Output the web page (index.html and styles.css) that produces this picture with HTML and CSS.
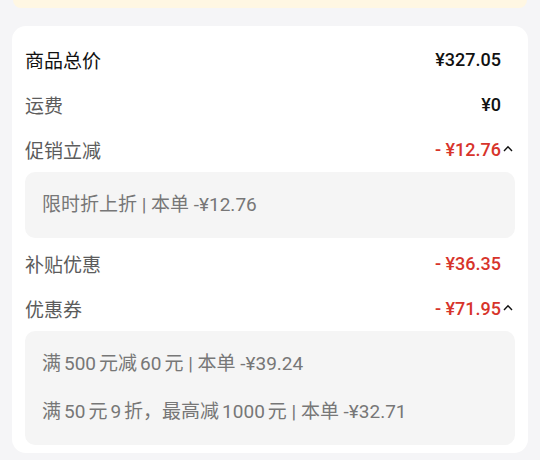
FILE: index.html
```html
<!DOCTYPE html>
<html lang="zh-CN">
<head>
<meta charset="utf-8">
<link rel="stylesheet" href="styles.css">
</head>
<body>
<div class="page">
  <div class="banner"></div>
  <div class="card">
    <div class="row">
      <span class="label dark">商品总价</span>
      <span class="value">¥327.05</span>
      <span class="slot"></span>
    </div>
    <div class="row">
      <span class="label">运费</span>
      <span class="value">¥0</span>
      <span class="slot"></span>
    </div>
    <div class="row">
      <span class="label">促销立减</span>
      <span class="value red">- ¥12.76</span>
      <span class="slot"><svg class="chev" viewBox="0 0 10 7" width="10" height="7"><polyline points="1,6 5,1.8 9,6" fill="none" stroke="#111" stroke-width="1.4"/></svg></span>
    </div>
    <div class="detail">
      <div class="line">限时折上折 | 本单 -¥12.76</div>
    </div>
    <div class="row after">
      <span class="label">补贴优惠</span>
      <span class="value red">- ¥36.35</span>
      <span class="slot"></span>
    </div>
    <div class="row">
      <span class="label">优惠券</span>
      <span class="value red">- ¥71.95</span>
      <span class="slot"><svg class="chev" viewBox="0 0 10 7" width="10" height="7"><polyline points="1,6 5,1.8 9,6" fill="none" stroke="#111" stroke-width="1.4"/></svg></span>
    </div>
    <div class="detail">
      <div class="line">满<span class="num">500</span>元减<span class="num">60</span>元 | 本单 -¥39.24</div>
      <div class="line">满<span class="num">50</span>元<span class="num">9</span>折，最高减<span class="num">1000</span>元 | 本单 -¥32.71</div>
    </div>
  </div>
</div>
</body>
</html>
```

FILE: styles.css
```css
html, body {
  margin: 0;
  padding: 0;
  background: #f5f5f7;
}
body {
  font-family: Roboto, "Noto Sans CJK SC", sans-serif;
  width: 540px;
  height: 460px;
  overflow: hidden;
}
.page {
  padding: 0 12px;
}
.banner {
  height: 8px;
  margin: 0 1px;
  background: #fff7e3;
  border-radius: 0 0 10px 10px;
}
.card {
  margin-top: 18px;
  background: #ffffff;
  border-radius: 14px;
  padding: 11px 13px 8px 13px;
}
.row {
  display: flex;
  align-items: center;
  height: 45px;
  font-size: 19px;
}
.row.after {
  margin-top: 3px;
}
.label {
  flex: 1;
  color: #5c5c5c;
}
.label.dark {
  color: #111111;
}
.value {
  color: #111111;
  font-size: 18px;
  font-weight: 500;
}
.value.red {
  color: #d7342b;
}
.slot {
  width: 14px;
  display: flex;
  justify-content: flex-end;
  align-items: center;
  padding-bottom: 2px;
}
.chev {
  display: block;
  margin-right: 2px;
}
.detail {
  background: #f5f5f5;
  border-radius: 10px;
  padding: 9px 17px;
}
.line {
  line-height: 48px;
  font-size: 19px;
  color: #777777;
}
.num {
  margin: 0 3px;
}
```
